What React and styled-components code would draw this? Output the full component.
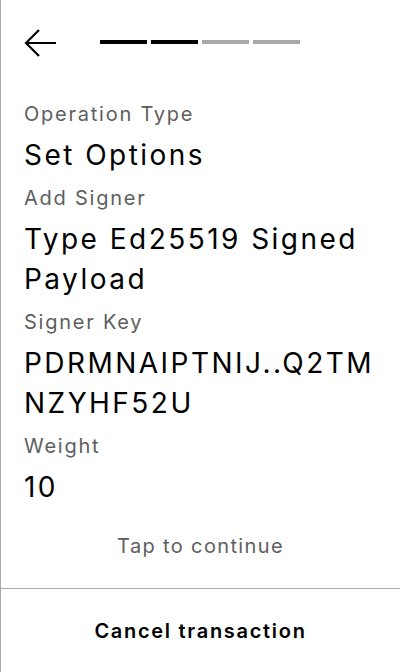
import React from 'react';
import styled, { createGlobalStyle } from 'styled-components';

const GlobalStyle = createGlobalStyle`
  html, body {
    margin: 0;
    padding: 0;
    background: #fff;
  }

  body {
    font-family: Inter, "Noto Sans", sans-serif;
    letter-spacing: 0.085em;
    color: #000;
  }

  * {
    box-sizing: border-box;
  }
`;

const Screen = styled.div`
  display: flex;
  flex-direction: column;
  height: 100vh;
  border-left: 1px solid #a8a8a8;
`;

const Header = styled.div`
  display: grid;
  grid-template-columns: 1fr auto 1fr;
  align-items: center;
  padding: 26px 24px 0 23px;
`;

const BackButton = styled.button`
  display: flex;
  width: 32px;
  height: 32px;
  padding: 0;
  border: none;
  background: none;
  cursor: pointer;
`;

const Steps = styled.div`
  display: flex;
  gap: 4px;
`;

const Step = styled.div`
  width: 47px;
  height: 4px;
  background-color: ${({ done }) => (done ? '#000' : '#aaa')};
`;

const Main = styled.div`
  flex: 1;
  padding: 42px 24px 0 23px;
`;

const Field = styled.div`
  margin-bottom: 9px;
`;

const Label = styled.div`
  font-size: 20px;
  line-height: 28px;
  letter-spacing: 0.088em;
  color: #5e5e5e;
  margin-bottom: 7px;
`;

const Value = styled.div`
  font-size: 28px;
  line-height: 40px;
  letter-spacing: 0.088em;
  color: #000;
  word-break: ${({ breakAll }) => (breakAll ? 'break-all' : 'normal')};
`;

const Hint = styled.div`
  padding-bottom: 28px;
  text-align: center;
  font-size: 20px;
  line-height: 28px;
  color: #5e5e5e;
`;

const CancelButton = styled.button`
  height: 84px;
  width: 100%;
  border: none;
  border-top: 1px solid #a8a8a8;
  background: none;
  font-family: Inter, "Noto Sans", sans-serif;
  font-size: 20px;
  font-weight: 600;
  letter-spacing: 0.085em;
  color: #000;
  cursor: pointer;
`;

const fields = [
  { label: 'Operation Type', value: 'Set Options' },
  { label: 'Add Signer', value: 'Type Ed25519 Signed Payload' },
  { label: 'Signer Key', value: 'PDRMNAIPTNIJ..Q2TMNZYHF52U', breakAll: true },
  { label: 'Weight', value: '10' },
];

const BackArrow = () => (
  <svg width="32" height="32" viewBox="0 0 32 32" fill="none">
    <path d="M32 17H2M15 4L2 17L15 30" stroke="#000" strokeWidth="2.2" />
  </svg>
);

export default () => (
  <Screen>
    <GlobalStyle />

    <Header>
      <BackButton aria-label="Back">
        <BackArrow />
      </BackButton>

      <Steps>
        <Step done />
        <Step done />
        <Step />
        <Step />
      </Steps>
    </Header>

    <Main>
      {fields.map(({ label, value, breakAll }) => (
        <Field key={label}>
          <Label>{label}</Label>
          <Value breakAll={breakAll}>{value}</Value>
        </Field>
      ))}
    </Main>

    <Hint>Tap to continue</Hint>

    <CancelButton>Cancel transaction</CancelButton>
  </Screen>
);
